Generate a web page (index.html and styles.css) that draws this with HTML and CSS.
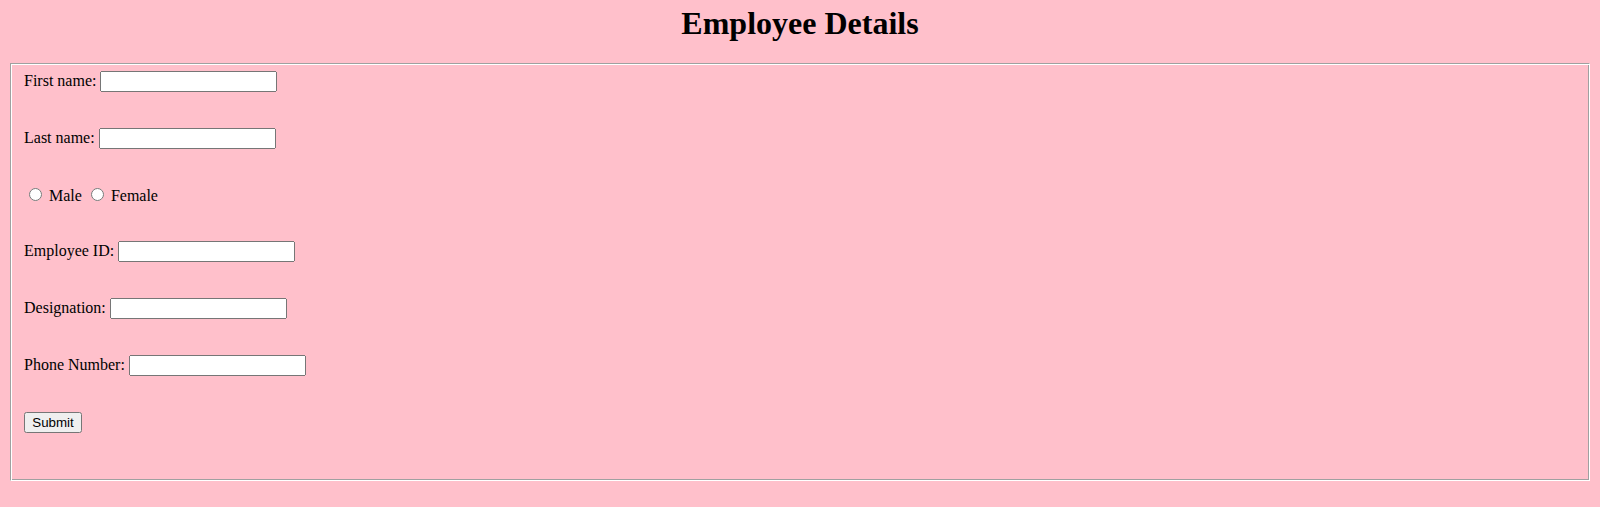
FILE: index.html
```html
<!DOCTYPE html>
<html>
<head>
<meta charset="utf-8">
<title>Employee Details</title>
<link rel="stylesheet" href="styles.css">
</head>
<body>
<h1 class="title">Employee Details</h1>
<form class="form">
  <fieldset class="panel">
    <div class="rows">
      <div class="row"><label class="lbl">First name:</label><input class="field" type="text"></div>
      <div class="row"><label class="lbl">Last name:</label><input class="field" type="text"></div>
      <div class="row row-radio"><input class="radio" type="radio" name="g"><span class="opt">Male</span><input class="radio" type="radio" name="g"><span class="opt">Female</span></div>
      <div class="row"><label class="lbl">Employee ID:</label><input class="field" type="text"></div>
      <div class="row"><label class="lbl">Designation:</label><input class="field" type="text"></div>
      <div class="row"><label class="lbl">Phone Number:</label><input class="field" type="text"></div>
      <div class="row"><button class="btn" type="button">Submit</button></div>
    </div>
  </fieldset>
</form>
</body>
</html>
```
FILE: styles.css
```css
html, body {
  background: #ffc0cb;
}
body {
  margin: 8px;
  font-family: "Liberation Serif", "Times New Roman", serif;
  font-size: 16px;
  color: #000;
}
.title {
  font-size: 32px;
  font-weight: bold;
  text-align: center;
  margin: -3.2px 0 21.4px;
}
.form {
  margin: 0;
}
.panel {
  margin: 0 2px;
  padding: 6.6px 13px 12px;
  border: 1px solid;
  border-color: #a0a0a0 #ffffff #ffffff #a0a0a0;
  box-shadow: inset 1px 1px 0 #ffffff, inset -1px -1px 0 #a0a0a0;
}
.rows {
  display: flex;
  flex-direction: column;
  gap: 35.8px;
  padding-bottom: 35.8px;
}
.row {
  display: flex;
  align-items: baseline;
  height: 21px;
}
.row-radio {
  padding-top: 0.7px;
  height: 20.3px;
}
.lbl {
  margin-right: 4px;
}
.field {
  width: 177px;
  box-sizing: border-box;
  font-family: "Liberation Sans", Arial, sans-serif;
  font-size: 13.333px;
  margin: 0;
}
.radio {
  margin: 3px 3px 0 5px;
  width: 13px;
  height: 13px;
}
.opt {
  margin-left: 4px;
  margin-right: 4px;
}
.btn {
  font-family: "Liberation Sans", Arial, sans-serif;
  font-size: 13.333px;
  margin: 0;
  width: 58px;
  padding: 1px 0;
}
```
